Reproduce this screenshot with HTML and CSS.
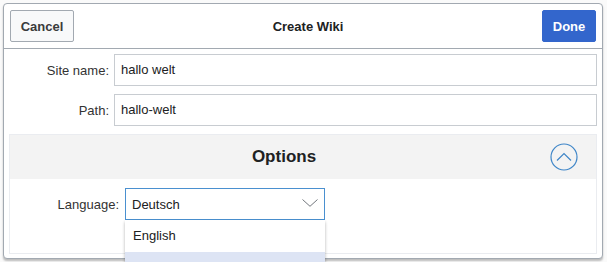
FILE: index.html
```html
<!DOCTYPE html>
<html>
<head>
<meta charset="utf-8">
<link rel="stylesheet" href="styles.css">
</head>
<body>
<div class="dialog">
  <div class="head">
    <button class="btn cancel">Cancel</button>
    <div class="title">Create Wiki</div>
    <button class="btn done">Done</button>
  </div>
  <div class="body">
    <div class="fields">
      <label class="lbl">Site name:</label>
      <div class="input">hallo welt</div>
      <label class="lbl">Path:</label>
      <div class="input">hallo-welt</div>
    </div>
    <div class="panel">
      <div class="panel-head">
        <div class="panel-title">Options</div>
        <svg class="toggle" width="28" height="28" viewBox="0 0 28 28">
          <circle cx="14" cy="14" r="13" fill="none" stroke="#3f86c8" stroke-width="1.2"/>
          <path d="M7 17.5 L14 10.5 L21 17.5" fill="none" stroke="#3f86c8" stroke-width="1.2"/>
        </svg>
      </div>
      <div class="panel-body">
        <label class="lbl lang">Language:</label>
        <div class="select-wrap">
          <div class="select">
            <span>Deutsch</span>
            <svg class="chev" width="16" height="8" viewBox="0 0 16 8">
              <path d="M0.5 0.5 L8 7.3 L15.5 0.5" fill="none" stroke="#72777d" stroke-width="1"/>
            </svg>
          </div>
          <div class="menu">
            <div class="item">English</div>
            <div class="item hl"></div>
          </div>
        </div>
      </div>
    </div>
  </div>
</div>
</body>
</html>
```
FILE: styles.css
```css
html, body {
  margin: 0;
  padding: 0;
  height: 262px;
  overflow: hidden;
  background: #fafafa;
  font-family: "Liberation Sans", Arial, sans-serif;
  color: #202122;
}
.dialog {
  margin: 3px 0 0 3px;
  width: 598px;
  height: 254px;
  border: 1px solid #a2a9b1;
  border-radius: 4px;
  background: #fff;
  box-shadow: 0 2px 2px 0 rgba(0,0,0,0.25);
  position: relative;
}
.head {
  height: 44px;
  border-bottom: 1px solid #a2a9b1;
  display: flex;
  align-items: center;
  justify-content: space-between;
  padding: 0 6px 0 6px;
}
.btn {
  height: 32px;
  border-radius: 2px;
  font-family: "Liberation Sans", Arial, sans-serif;
  font-size: 13px;
  font-weight: bold;
  padding: 0;
}
.cancel {
  width: 64px;
  background: #f8f9fa;
  border: 1px solid #a2a9b1;
  color: #3a3b3c;
}
.done {
  width: 54px;
  background: #3366cc;
  border: 1px solid #3366cc;
  color: #fff;
}
.title {
  font-size: 13px;
  font-weight: bold;
  color: #202122;
}
.body {
  padding: 5px 5px 0 5px;
}
.fields {
  display: grid;
  grid-template-columns: 100px 1fr;
  column-gap: 5px;
  row-gap: 8px;
  align-items: center;
}
.lbl {
  font-size: 13px;
  text-align: right;
  color: #333;
}
.input {
  height: 30px;
  border: 1px solid #c8ccd1;
  font-size: 13px;
  line-height: 30px;
  padding-left: 6px;
  color: #202122;
}
.panel {
  margin-top: 8px;
  border: 1px solid #eaecf0;
  height: 118px;
}
.panel-head {
  height: 44px;
  background: #f3f3f3;
  display: flex;
  align-items: center;
  position: relative;
}
.panel-title {
  flex: 1;
  text-align: center;
  font-size: 17px;
  font-weight: bold;
  padding-left: 8px;
  color: #202122;
}
.toggle {
  margin-right: 18px;
  display: block;
}
.panel-body {
  display: flex;
  align-items: center;
  padding-top: 9px;
  column-gap: 6px;
}
.lang {
  width: 109px;
}
.select-wrap {
  position: relative;
  width: 200px;
}
.select {
  height: 30px;
  border: 1px solid #4a90d0;
  display: flex;
  align-items: center;
  justify-content: space-between;
  padding: 0 6px 0 6px;
  font-size: 13px;
}
.chev {
  display: block;
  margin-top: -2px;
}
.menu {
  position: absolute;
  left: 0;
  top: 32px;
  width: 200px;
  background: #fff;
  box-shadow: 0 2px 3px rgba(0,0,0,0.3);
}
.item {
  height: 32px;
  line-height: 32px;
  padding-left: 8px;
  font-size: 13px;
  color: #202122;
}
.item.hl {
  background: #dde4f4;
}
```
